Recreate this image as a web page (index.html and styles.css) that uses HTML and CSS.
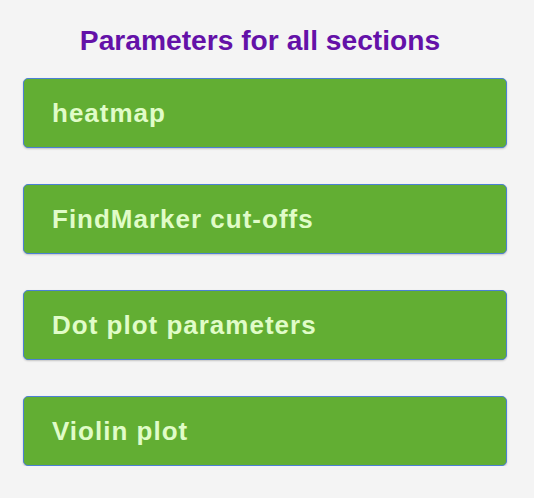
FILE: index.html
```html
<!DOCTYPE html>
<html>
<head>
<meta charset="utf-8">
<link rel="stylesheet" href="styles.css">
</head>
<body>
<div class="panel">
  <h2 class="title">Parameters for all sections</h2>
  <div class="sections">
    <div class="section">heatmap</div>
    <div class="section">FindMarker cut-offs</div>
    <div class="section">Dot plot parameters</div>
    <div class="section">Violin plot</div>
  </div>
</div>
</body>
</html>
```
FILE: styles.css
```css
html, body {
  margin: 0;
  padding: 0;
  background: #f4f4f4;
}
body {
  font-family: "Liberation Sans", Arial, sans-serif;
}
.panel {
  width: 484px;
  padding: 24px 27px 0 23px;
}
.title {
  margin: 0 0 22px 0;
  font-size: 28.2px;
  line-height: 32px;
  font-weight: bold;
  color: #6411a8;
  text-align: center;
  padding-right: 10px;
}
.sections {
  display: flex;
  flex-direction: column;
  gap: 36px;
}
.section {
  box-sizing: border-box;
  height: 70px;
  background: #62ae33;
  border: 1px solid #4b80d4;
  border-radius: 5px;
  box-shadow: 0 1px 2px rgba(0, 0, 0, 0.2);
  color: #e0fcc8;
  font-size: 26px;
  font-weight: bold;
  letter-spacing: 1px;
  line-height: 29px;
  padding: 20px 20px 0 28px;
}
```
